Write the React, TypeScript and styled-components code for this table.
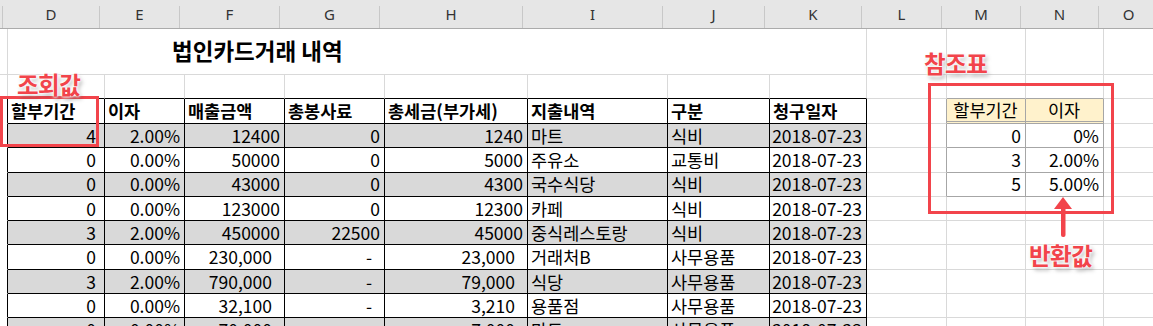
import React from "react";
import styled, { createGlobalStyle } from "styled-components";

const GlobalStyle = createGlobalStyle`
  html, body {
    margin: 0;
    padding: 0;
    background: #fff;
    overflow: hidden;
  }
  body {
    font-family: "Noto Sans CJK KR", "Noto Sans", sans-serif;
    color: #000;
  }
`;

const GRID = "#d9d9d9";
const BLACK = "#000";
const REF = "#a6a6a6";
const GRAY_FILL = "#d9d9d9";
const REF_FILL = "#fff2cc";
const RED = "#f2444b";

// C (sliver) .. O
const COLS = [
  { key: "", w: 3 },
  { key: "D", w: 97 },
  { key: "E", w: 80 },
  { key: "F", w: 100 },
  { key: "G", w: 100 },
  { key: "H", w: 143 },
  { key: "I", w: 140 },
  { key: "J", w: 102 },
  { key: "K", w: 97 },
  { key: "L", w: 80 },
  { key: "M", w: 79 },
  { key: "N", w: 78 },
  { key: "O", w: 60 },
];

type Align = "left" | "right" | "center";

type Val = { t: string; acc?: boolean };

const HEADERS = ["할부기간", "이자", "매출금액", "총봉사료", "총세금(부가세)", "지출내역", "구분", "청구일자"];

const ROWS: Val[][] = [
  [{ t: "4" }, { t: "2.00%" }, { t: "12400" }, { t: "0" }, { t: "1240" }, { t: "마트" }, { t: "식비" }, { t: "2018-07-23" }],
  [{ t: "0" }, { t: "0.00%" }, { t: "50000" }, { t: "0" }, { t: "5000" }, { t: "주유소" }, { t: "교통비" }, { t: "2018-07-23" }],
  [{ t: "0" }, { t: "0.00%" }, { t: "43000" }, { t: "0" }, { t: "4300" }, { t: "국수식당" }, { t: "식비" }, { t: "2018-07-23" }],
  [{ t: "0" }, { t: "0.00%" }, { t: "123000" }, { t: "0" }, { t: "12300" }, { t: "카페" }, { t: "식비" }, { t: "2018-07-23" }],
  [{ t: "3" }, { t: "2.00%" }, { t: "450000" }, { t: "22500" }, { t: "45000" }, { t: "중식레스토랑" }, { t: "식비" }, { t: "2018-07-23" }],
  [{ t: "0" }, { t: "0.00%" }, { t: "230,000", acc: true }, { t: "-", acc: true }, { t: "23,000", acc: true }, { t: "거래처B" }, { t: "사무용품" }, { t: "2018-07-23" }],
  [{ t: "3" }, { t: "2.00%" }, { t: "790,000", acc: true }, { t: "-", acc: true }, { t: "79,000", acc: true }, { t: "식당" }, { t: "사무용품" }, { t: "2018-07-23" }],
  [{ t: "0" }, { t: "0.00%" }, { t: "32,100", acc: true }, { t: "-", acc: true }, { t: "3,210", acc: true }, { t: "용품점" }, { t: "사무용품" }, { t: "2018-07-23" }],
  [{ t: "0" }, { t: "0.00%" }, { t: "70,000", acc: true }, { t: "-", acc: true }, { t: "7,000", acc: true }, { t: "마트" }, { t: "사무용품" }, { t: "2018-07-23" }],
];

// columns I and J hold text, the rest numbers/dates
const TEXT_COLS = [5, 6];

const REF_ROWS = [
  ["0", "0%"],
  ["3", "2.00%"],
  ["5", "5.00%"],
];

const Sheet = styled.div`
  position: relative;
  width: 1153px;
  height: 326px;
  overflow: hidden;
  display: flex;
  flex-direction: column;
`;

const ColHeaderBar = styled.div`
  display: flex;
  height: 29px;
  flex-shrink: 0;
  background: #e6e6e6;
  border-bottom: 1px solid #ababab;
  box-sizing: border-box;
`;

const ColLetter = styled.div<{ $w: number }>`
  width: ${(p) => p.$w}px;
  flex-shrink: 0;
  box-sizing: border-box;
  border-right: 1px solid #c8c8c8;
  margin-top: 6px;
  display: flex;
  align-items: center;
  justify-content: center;
  font-family: "Noto Sans", "Liberation Sans", sans-serif;
  font-size: 15px;
  color: #333;
  padding-bottom: 6px;
`;

const Row = styled.div<{ $h: number }>`
  display: flex;
  height: ${(p) => p.$h}px;
  flex-shrink: 0;
`;

const Cell = styled.div<{
  $w: number;
  $align?: Align;
  $pr?: number;
  $bg?: string;
  $right?: string;
  $bottom?: string;
  $double?: boolean;
  $bold?: boolean;
}>`
  width: ${(p) => p.$w}px;
  flex-shrink: 0;
  box-sizing: border-box;
  display: flex;
  align-items: center;
  justify-content: ${(p) =>
    p.$align === "right" ? "flex-end" : p.$align === "center" ? "center" : "flex-start"};
  padding: 0 ${(p) => p.$pr ?? 4}px 0 3px;
  background: ${(p) => p.$bg ?? "transparent"};
  border-right: 1px solid ${(p) => p.$right ?? GRID};
  border-bottom: ${(p) => (p.$double ? "3px double" : "1px solid")} ${(p) => p.$bottom ?? GRID};
  font-size: 17.5px;
  line-height: 1;
  font-weight: ${(p) => (p.$bold ? 700 : 400)};
  white-space: nowrap;
`;

const TitleCell = styled(Cell)`
  font-size: 22.5px;
  font-weight: 700;
  padding-left: 164px;
  padding-bottom: 2px;
`;

const RedBox = styled.div<{ $x: number; $y: number; $w: number; $h: number }>`
  position: absolute;
  left: ${(p) => p.$x}px;
  top: ${(p) => p.$y}px;
  width: ${(p) => p.$w}px;
  height: ${(p) => p.$h}px;
  box-sizing: border-box;
  border: 3px solid ${RED};
  pointer-events: none;
`;

const Callout = styled.div<{ $x: number; $y: number }>`
  position: absolute;
  left: ${(p) => p.$x}px;
  top: ${(p) => p.$y}px;
  font-family: "Noto Sans CJK KR", sans-serif;
  font-size: 23.5px;
  font-weight: 700;
  line-height: 26px;
  color: ${RED};
  letter-spacing: -0.5px;
  text-shadow: 0 0 2px #fff, 0 0 3px #fff, 0 0 4px #fff, 2px 3px 4px rgba(0, 0, 0, 0.35);
`;

const Arrow = styled.svg`
  position: absolute;
  left: 1054px;
  top: 197px;
`;

const ColumnHeaders = () => (
  <ColHeaderBar>
    {COLS.map((c, i) => (
      <ColLetter key={i} $w={c.w}>
        {c.key}
      </ColLetter>
    ))}
  </ColHeaderBar>
);

const TitleRow = () => {
  const mergedW = COLS.slice(1, 9).reduce((s, c) => s + c.w, 0);
  return (
    <Row $h={46}>
      <Cell $w={COLS[0].w} $bottom={GRID} />
      <TitleCell $w={mergedW}>법인카드거래 내역</TitleCell>
      {COLS.slice(9).map((c, i) => (
        <Cell key={i} $w={c.w} />
      ))}
    </Row>
  );
};

const BlankRow = () => (
  <Row $h={24}>
    {COLS.map((c, i) => (
      <Cell
        key={i}
        $w={c.w}
        $bottom={i >= 1 && i <= 8 ? BLACK : i === 10 || i === 11 ? REF : GRID}
      />
    ))}
  </Row>
);

type TableRowProps = {
  h: number;
  values: { t: string; align: Align; pr?: number }[];
  header?: boolean;
  shaded?: boolean;
  refCells?: string[];
  refHeader?: boolean;
};

const TableRow = ({ h, values, header, shaded, refCells, refHeader }: TableRowProps) => (
  <Row $h={h}>
    <Cell $w={COLS[0].w} $right={BLACK} $bottom="transparent" />
    {values.map((v, i) => (
      <Cell
        key={i}
        $w={COLS[i + 1].w}
        $align={v.align}
        $pr={v.pr}
        $right={BLACK}
        $bottom={BLACK}
        $bg={shaded ? GRAY_FILL : undefined}
        $bold={header}
      >
        {v.t}
      </Cell>
    ))}
    <Cell $w={COLS[9].w} $right={refCells ? REF : GRID} />
    {[10, 11].map((ci, k) =>
      refCells ? (
        <Cell
          key={ci}
          $w={COLS[ci].w}
          $align={refHeader ? "center" : "right"}
          $right={REF}
          $bottom={REF}
          $double={refHeader}
          $bg={refHeader ? REF_FILL : undefined}
        >
          {refCells[k]}
        </Cell>
      ) : (
        <Cell key={ci} $w={COLS[ci].w} />
      )
    )}
    <Cell $w={COLS[12].w} />
  </Row>
);

export default function App() {
  return (
    <>
      <GlobalStyle />
      <Sheet>
        <ColumnHeaders />
        <TitleRow />
        <BlankRow />
        <TableRow
          h={25}
          header
          values={HEADERS.map((t) => ({ t, align: "left" as Align }))}
          refCells={["할부기간", "이자"]}
          refHeader
        />
        {ROWS.map((r, ri) => (
          <TableRow
            key={ri}
            h={24.3}
            shaded={ri % 2 === 0}
            values={r.map((v, ci) => ({
              t: v.t,
              align: TEXT_COLS.includes(ci) ? "left" : "right",
              pr: v.acc ? 12 : ci === 0 ? 8 : 4,
            }))}
            refCells={REF_ROWS[ri]}
          />
        ))}

        <RedBox $x={0} $y={96} $w={99} $h={51} />
        <RedBox $x={928} $y={83} $w={186} $h={131} />
        <Callout $x={17} $y={71}>조회값</Callout>
        <Callout $x={924} $y={50}>참조표</Callout>
        <Callout $x={1029} $y={242}>반환값</Callout>
        <Arrow width="20" height="42" viewBox="0 0 20 42">
          <path d="M9 0 L18 12 L0 12 Z" fill={RED} />
          <rect x="7" y="10" width="4.5" height="30" rx="2" fill={RED} />
        </Arrow>
      </Sheet>
    </>
  );
}
